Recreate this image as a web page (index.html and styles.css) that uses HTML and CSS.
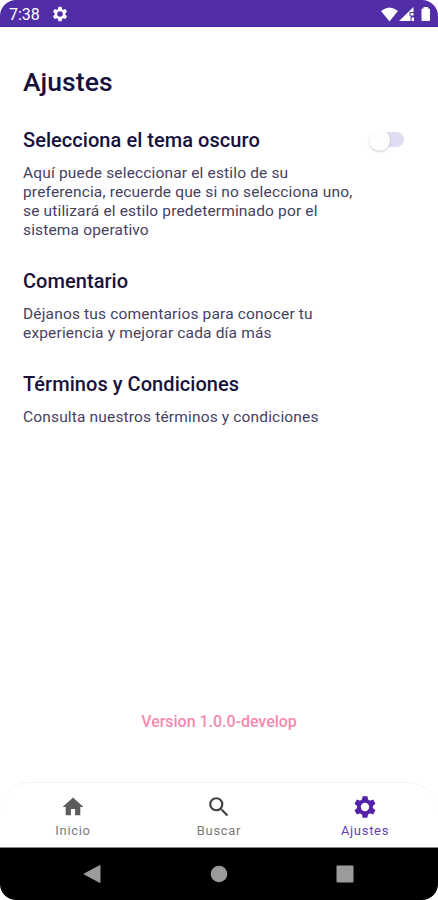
FILE: index.html
```html
<!DOCTYPE html>
<html lang="es">
<head>
<meta charset="utf-8">
<title>Ajustes</title>
<link rel="stylesheet" href="styles.css">
</head>
<body>
<svg class="defs" width="0" height="0" aria-hidden="true">
  <symbol id="gear" viewBox="0 0 24 24">
    <circle cx="12" cy="12" r="6.100" fill="none" stroke="currentColor" stroke-width="3.800"/>
    <g fill="currentColor">
      <path id="tooth" d="M9.600 1.300h4.800l.8 4.200h-6.400z"/>
      <use href="#tooth" transform="rotate(60 12 12)"/>
      <use href="#tooth" transform="rotate(120 12 12)"/>
      <use href="#tooth" transform="rotate(180 12 12)"/>
      <use href="#tooth" transform="rotate(240 12 12)"/>
      <use href="#tooth" transform="rotate(300 12 12)"/>
    </g>
  </symbol>
</svg>
<div class="phone">
  <header class="status">
    <span class="time">7:38</span>
    <svg class="status-gear"><use href="#gear"/></svg>
    <svg class="signals" width="50" height="16" viewBox="0 0 50 16" fill="#fff">
      <path d="M0 4Q8.500-3 17 4L8.500 14.500Z"/>
      <path d="M32.500 0v5h-4v4h-3.500v5h-7z"/>
      <path d="M29.500 6h3v2.500h-3zM25 9h4.500v5h-4.500zM30.500 10.500h2.500v3.500h-2.500z"/>
      <path d="M42.500 0h4.500v1.500h1q1 0 1 1V13q0 1-1 1h-6.500q-1 0-1-1V2.500q0-1 1-1h1z"/>
    </svg>
  </header>
  <main class="content">
    <h1>Ajustes</h1>
    <section>
      <div class="row">
        <h2>Selecciona el tema oscuro</h2>
        <span class="switch"><span class="thumb"></span></span>
      </div>
      <p>Aquí puede seleccionar el estilo de su<br>preferencia, recuerde que si no selecciona uno,<br>se utilizará el estilo predeterminado por el<br>sistema operativo</p>
    </section>
    <section>
      <h2>Comentario</h2>
      <p>Déjanos tus comentarios para conocer tu<br>experiencia y mejorar cada día más</p>
    </section>
    <section>
      <h2>Términos y Condiciones</h2>
      <p>Consulta nuestros términos y condiciones</p>
    </section>
    <div class="version">Version 1.0.0-develop</div>
  </main>
  <nav class="tabs">
    <a class="tab">
      <svg viewBox="0.500 0.500 23 23" fill="#5c5c5c"><path d="M10 20v-6h4v6h5v-8h3L12 3 2 12h3v8z"/></svg>
      <span>Inicio</span>
    </a>
    <a class="tab">
      <svg viewBox="1 1 22 22" fill="#424242"><path d="M15.500 14h-.79l-.28-.27A6.470 6.470 0 0 0 16 9.500 6.500 6.500 0 1 0 9.500 16c1.610 0 3.090-.59 4.230-1.570l.27.28v.79l5 4.990L20.490 19zm-6 0C7.010 14 5 11.990 5 9.500S7.010 5 9.500 5 14 7.010 14 9.500 11.990 14 9.500 14z"/></svg>
      <span>Buscar</span>
    </a>
    <a class="tab active">
      <svg><use href="#gear"/></svg>
      <span>Ajustes</span>
    </a>
  </nav>
  <footer class="system">
    <svg width="20" height="20"><path d="M1 10L17 1.500v17z" fill="#9b9b9b" stroke="#9b9b9b" stroke-linejoin="round"/></svg>
    <svg width="20" height="20"><circle cx="10" cy="10" r="8.300" fill="#9b9b9b"/></svg>
    <svg width="20" height="20"><rect x="1.500" y="1.500" width="17" height="17" rx="1" fill="#9b9b9b"/></svg>
  </footer>
</div>
</body>
</html>
```
FILE: styles.css
```css
* { box-sizing: border-box; }
body { margin: 0; background: #fff; font-family: Roboto, sans-serif; }
.defs { position: absolute; }
.phone {
  width: 438px;
  height: 900px;
  display: flex;
  flex-direction: column;
  border-radius: 16px;
  overflow: hidden;
}
.status {
  height: 27px;
  flex: none;
  display: flex;
  align-items: center;
  padding: 2px 7px 0 9px;
  background: #512da8;
  border-bottom: 1px solid #4420a0;
  color: #fff;
}
.time { width: 43px; font-size: 16px; line-height: 20px; padding-top: 1px; }
.status-gear { width: 16px; height: 16px; }
.signals { margin: 1px 0 0 auto; }
.content {
  flex: 1;
  display: flex;
  flex-direction: column;
  padding: 38px 23px 0;
  color: #17123c;
}
h1 { margin: 0 0 28px; font-size: 26.5px; line-height: 34px; font-weight: 500; letter-spacing: 0.05px; }
h2 { margin: 0; font-size: 20px; line-height: 26px; font-weight: 500; letter-spacing: 0.05px; }
.row { display: flex; justify-content: space-between; align-items: center; padding-right: 11px; }
section { margin-bottom: 28.5px; }
p {
  margin: 11.4px 0 0;
  font-size: 15.5px;
  line-height: 18.7px;
  letter-spacing: 0.16px;
  color: #45415f;
  white-space: nowrap;
}
.switch { width: 34px; height: 15px; border-radius: 8px; background: #e2dcf3; margin-top: -2px; }
.thumb {
  display: block;
  width: 21px;
  height: 21px;
  margin: -2px 0 0 -1px;
  border-radius: 50%;
  background: #fdfdfd;
  box-shadow: 0 1px 2px rgba(0, 0, 0, 0.22);
}
.version {
  margin-top: auto;
  margin-bottom: 50.5px;
  text-align: center;
  font-size: 16px;
  line-height: 20px;
  font-weight: 500;
  letter-spacing: -0.03px;
  color: #f48aad;
}
.tabs {
  height: 65px;
  flex: none;
  display: flex;
  border-top: 1px solid #f3f3f3;
  border-radius: 30px 30px 0 0;
  background: #fff;
}
.tab {
  flex: 1;
  display: flex;
  flex-direction: column;
  align-items: center;
  padding-top: 12px;
  font-size: 13px;
  line-height: 16px;
  letter-spacing: 0.7px;
  color: #7c7c7c;
}
.tab svg { width: 24px; height: 24px; margin-bottom: 4px; }
.active { color: #6440b5; }
.active svg { color: #5521a8; }
.system {
  height: 53px;
  flex: none;
  display: flex;
  justify-content: space-between;
  padding: 16px 83px 0;
  background: #000;
  border-top: 1px solid #888;
}
```
